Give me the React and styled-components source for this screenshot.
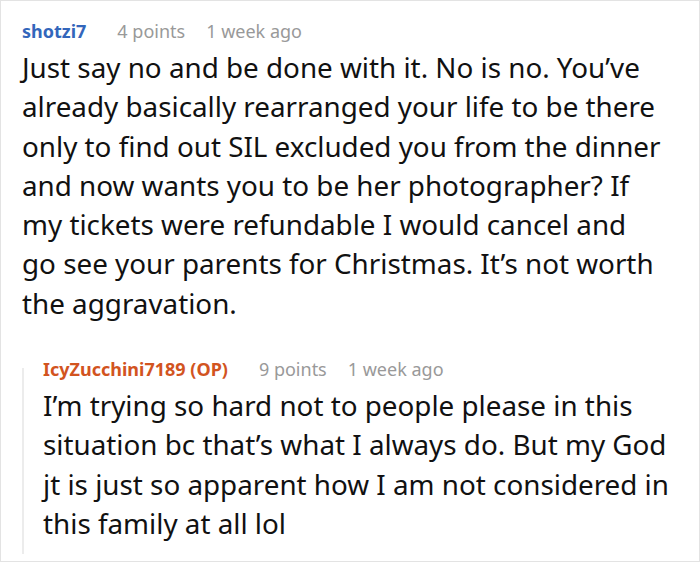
import React from "react";
import styled, { createGlobalStyle } from "styled-components";

const Global = createGlobalStyle`
  html, body { margin: 0; padding: 0; background: #fff; }
  body { font-family: "Noto Sans", "Open Sans", sans-serif; }
`;

const Card = styled.div`
  box-sizing: border-box;
  width: 700px;
  height: 562px;
  border: 1px solid #e3e3e3;
  padding: 18px 0 0 21px;
  background: #fff;
  overflow: hidden;
`;

const Header = styled.div`
  display: flex;
  align-items: baseline;
  font-size: 18px;
  line-height: 25px;
  white-space: nowrap;
`;

const Author = styled.span`
  font-weight: 700;
  color: ${(p) => (p.$op ? "#d2541f" : "#3366bb")};
  margin-right: 31px;
`;

const Meta = styled.span`
  color: #999;
  margin-right: ${(p) => p.$gap || 0}px;
`;

const Body = styled.p`
  margin: 4px 0 0;
  font-size: 27.8px;
  line-height: 39.3px;
  color: #111;
  white-space: nowrap;
`;

const Reply = styled.div`
  position: relative;
  margin-top: 34px;
  padding-left: 21px;
  &::before {
    content: "";
    position: absolute;
    left: 0;
    top: 11px;
    bottom: -11px;
    width: 2px;
    background: #ececec;
  }
`;

function Comment({ author, op, points, age, lines }) {
  return (
    <div>
      <Header>
        <Author $op={op}>{author}</Author>
        <Meta $gap={21}>{points}</Meta>
        <Meta>{age}</Meta>
      </Header>
      <Body>
        {lines.map((l, i) => (
          <React.Fragment key={i}>
            {l}
            {i < lines.length - 1 && <br />}
          </React.Fragment>
        ))}
      </Body>
    </div>
  );
}

const mainLines = [
  "Just say no and be done with it. No is no. You’ve",
  "already basically rearranged your life to be there",
  "only to find out SIL excluded you from the dinner",
  "and now wants you to be her photographer? If",
  "my tickets were refundable I would cancel and",
  "go see your parents for Christmas. It’s not worth",
  "the aggravation.",
];

const replyLines = [
  "I’m trying so hard not to people please in this",
  "situation bc that’s what I always do. But my God",
  "jt is just so apparent how I am not considered in",
  "this family at all lol",
];

export default function App() {
  return (
    <>
      <Global />
      <Card>
        <Comment author="shotzi7" points="4 points" age="1 week ago" lines={mainLines} />
        <Reply>
          <Comment author="IcyZucchini7189 (OP)" op points="9 points" age="1 week ago" lines={replyLines} />
        </Reply>
      </Card>
    </>
  );
}
